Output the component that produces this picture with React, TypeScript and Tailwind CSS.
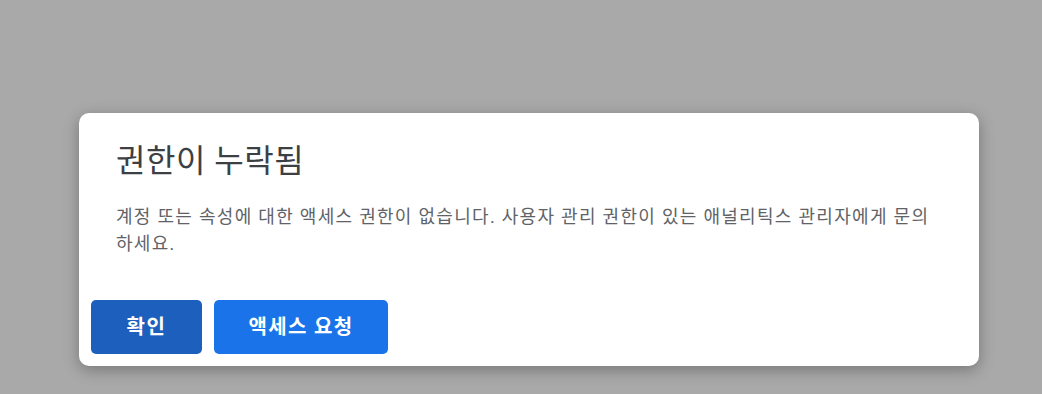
export default function App() {
  return (
    <div className="h-[394px] w-full bg-[#a9a9a9] pl-[79px] pt-[113px] font-['Roboto','Noto_Sans_CJK_KR',sans-serif]">
      <div className="flex h-[253px] w-[900px] flex-col rounded-[10px] bg-white shadow-[0_4px_16px_rgba(0,0,0,0.3)]">
        <div className="px-[37px] pt-[26px]">
          <h1 className="text-[32px] leading-[44px] font-normal tracking-[0.5px] text-[#3c4043]">권한이 누락됨</h1>
          <p className="mt-[20px] text-[18px] leading-[27px] tracking-[1.3px] text-[#5f6368]">
            계정 또는 속성에 대한 액세스 권한이 없습니다. 사용자 관리 권한이 있는 애널리틱스 관리자에게 문의하세요.
          </p>
        </div>
        <div className="mt-auto flex gap-[12px] px-[12px] pb-[12px]">
          <button
            type="button"
            className="h-[54px] w-[111px] rounded-[5px] bg-[#1d5fbd] text-[20px] font-bold tracking-[1.5px] text-white"
          >
            확인
          </button>
          <button
            type="button"
            className="h-[54px] w-[174px] rounded-[5px] bg-[#1a73e8] text-[20px] font-bold tracking-[1.3px] text-white"
          >
            액세스 요청
          </button>
        </div>
      </div>
    </div>
  );
}
